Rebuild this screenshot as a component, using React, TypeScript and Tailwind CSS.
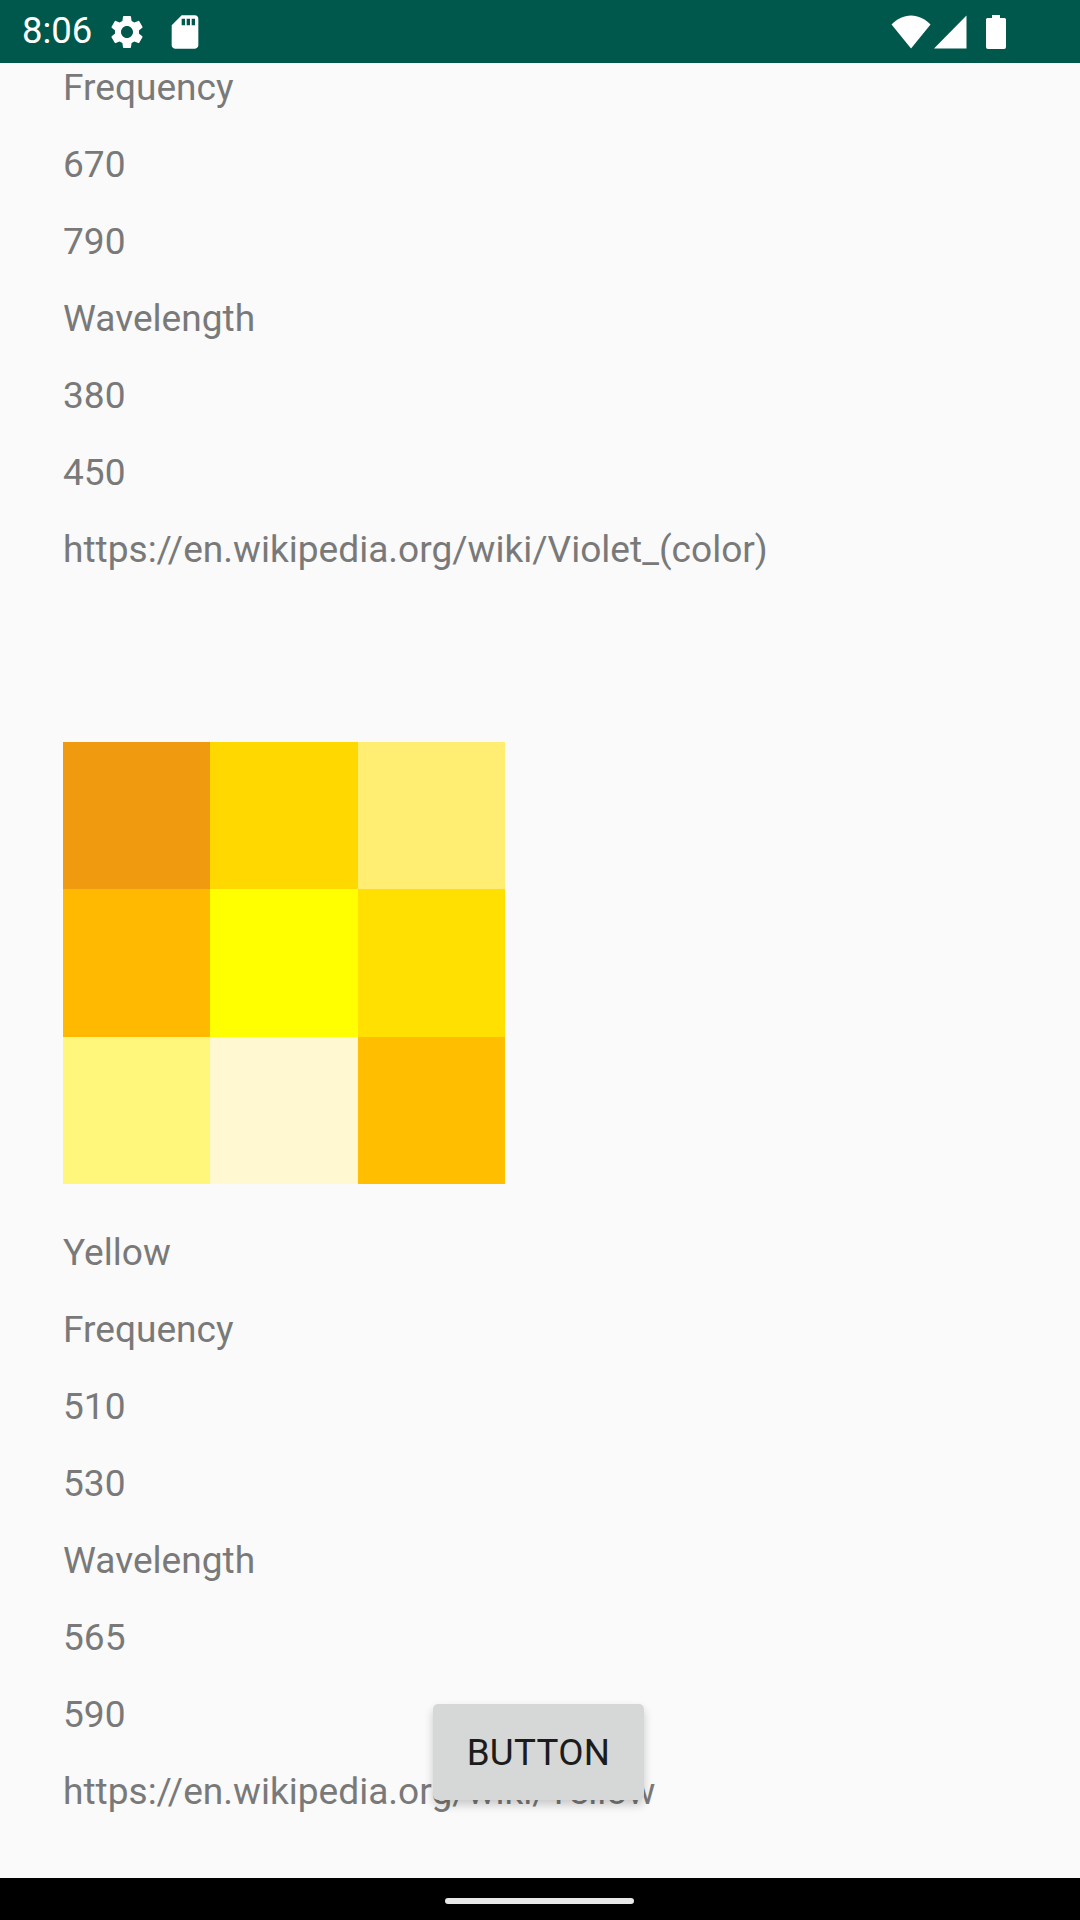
const swatches = [
  'bg-[#F09A10]', 'bg-[#FFD800]', 'bg-[#FFEE72]',
  'bg-[#FFB900]', 'bg-[#FFFF00]', 'bg-[#FFE000]',
  'bg-[#FFF67C]', 'bg-[#FFF8D0]', 'bg-[#FFBF00]',
];

function Line({ children }: { children: string }) {
  return <p className="h-[77px] leading-[77px] whitespace-nowrap">{children}</p>;
}

function StatusBar() {
  return (
    <div className="h-[63px] shrink-0 bg-[#00574B] flex items-center text-white relative z-10">
      <span className="ml-[22px] w-[69px] text-[36.5px] leading-none">8:06</span>
      {/* settings */}
      <svg className="ml-[16px] w-[40px] h-[40px]" viewBox="0 0 24 24" fill="currentColor">
        <path d="M19.14 12.94c.04-.3.06-.61.06-.94 0-.32-.02-.64-.07-.94l2.03-1.58c.18-.14.23-.41.12-.61l-1.92-3.32c-.12-.22-.37-.29-.59-.22l-2.39.96c-.5-.38-1.03-.7-1.62-.94l-.36-2.54c-.04-.24-.24-.41-.48-.41h-3.84c-.24 0-.43.17-.47.41l-.36 2.54c-.59.24-1.13.57-1.62.94l-2.39-.96c-.22-.08-.47 0-.59.22L2.74 8.87c-.12.21-.08.47.12.61l2.03 1.58c-.05.3-.09.63-.09.94s.02.64.07.94l-2.03 1.58c-.18.14-.23.41-.12.61l1.92 3.32c.12.22.37.29.59.22l2.39-.96c.5.38 1.03.7 1.62.94l.36 2.54c.05.24.24.41.48.41h3.84c.24 0 .44-.17.47-.41l.36-2.54c.59-.24 1.13-.56 1.62-.94l2.39.96c.22.08.47 0 .59-.22l1.92-3.32c.12-.22.07-.47-.12-.61l-2.01-1.58zM12 15.6c-1.98 0-3.6-1.62-3.6-3.6s1.62-3.6 3.6-3.6 3.6 1.62 3.6 3.6-1.62 3.6-3.6 3.6z" />
      </svg>
      {/* sd card */}
      <svg className="ml-[18px] w-[40px] h-[40px]" viewBox="0 0 24 24" fill="currentColor">
        <path d="M18 2h-8L4.02 8 4 20c0 1.100.9 2 2 2h12c1.100 0 2-.9 2-2V4c0-1.100-.9-2-2-2zm-6 6h-2V4h2v4zm3 0h-2V4h2v4zm3 0h-2V4h2v4z" />
      </svg>
      {/* wifi */}
      <svg className="ml-auto w-[40px] h-[34px]" viewBox="0 0 40 34" fill="currentColor">
        <path d="M20 33.5 0.5 9.5C6 4 12.500 0.500 20 0.500s14 3.500 19.500 9z" />
      </svg>
      {/* signal */}
      <svg className="ml-[3px] w-[33px] h-[34px]" viewBox="0 0 33 34" fill="currentColor">
        <path d="M32.5 0.5v33H0z" />
      </svg>
      {/* battery */}
      <svg className="ml-[19px] mr-[74px] w-[20px] h-[34px]" viewBox="0 0 20 34" fill="currentColor">
        <path d="M6 0h8v3h4.500a1.500 1.500 0 0 1 1.500 1.500V32a2 2 0 0 1-2 2H2a2 2 0 0 1-2-2V4.500A1.500 1.500 0 0 1 1.500 3H6z" />
      </svg>
    </div>
  );
}

export default function App() {
  return (
    <div className="relative w-[1080px] h-[1920px] flex flex-col overflow-hidden bg-[#FAFAFA] font-['Roboto',sans-serif]">
      <StatusBar />

      <main className="flex-1 min-h-0 overflow-hidden px-[63px] text-[37.1px] text-[#797979]">
        <div className="-mt-[14px]">
          <Line>Frequency</Line>
          <Line>670</Line>
          <Line>790</Line>
          <Line>Wavelength</Line>
          <Line>380</Line>
          <Line>450</Line>
          <Line>https://en.wikipedia.org/wiki/Violet_(color)</Line>

          <div className="mt-[154px] mb-[30px] w-[442px] h-[442px] grid grid-cols-3 grid-rows-3">
            {swatches.map((color) => (
              <div key={color} className={color} />
            ))}
          </div>

          <Line>Yellow</Line>
          <Line>Frequency</Line>
          <Line>510</Line>
          <Line>530</Line>
          <Line>Wavelength</Line>
          <Line>565</Line>
          <Line>590</Line>
          <Line>https://en.wikipedia.org/wiki/Yellow</Line>
        </div>
      </main>

      <div className="h-[42px] shrink-0 bg-black flex items-center justify-center pt-[4px] pr-[1px]">
        <div className="w-[189px] h-[6px] rounded-full bg-[#E8E8E8]" />
      </div>

      {/* floats over the list */}
      <button className="absolute left-[433px] top-[1704px] w-[211px] h-[96px] pt-[2px] rounded-[5px] bg-[#D6D7D7] text-[#1C1C1C] text-[36.75px] font-[450] tracking-[0.3px] shadow-[0_5px_10px_rgba(0,0,0,0.2)]">
        BUTTON
      </button>
    </div>
  );
}
